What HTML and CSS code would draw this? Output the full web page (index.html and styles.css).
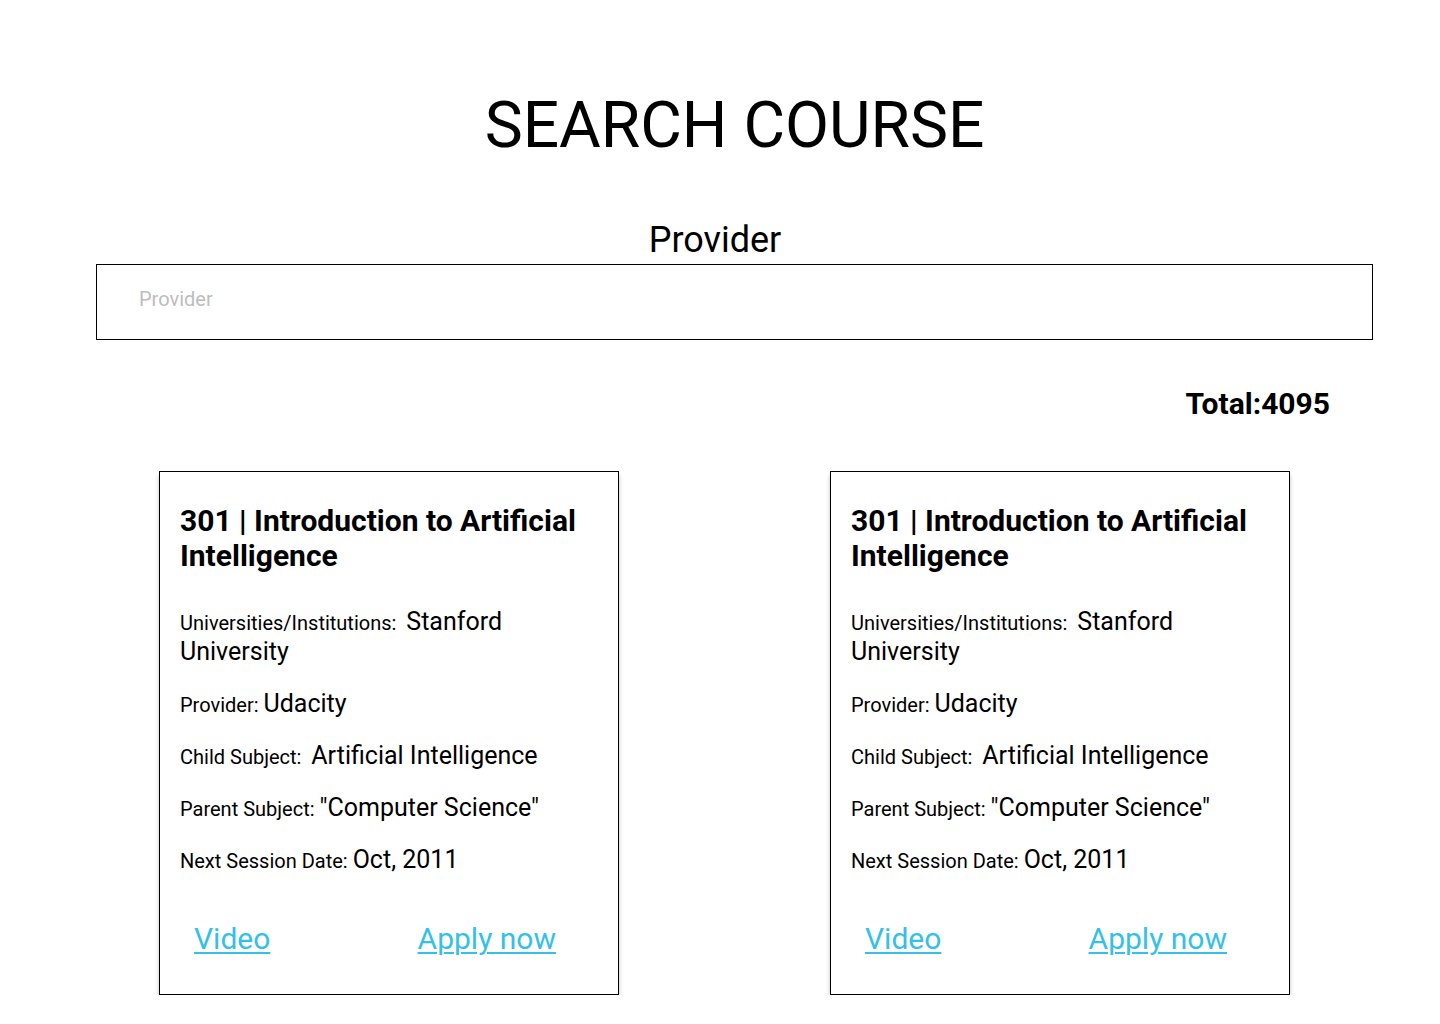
FILE: index.html
```html
<!DOCTYPE html>
<html lang="en">
<head>
<meta charset="utf-8">
<title>Search Course</title>
<link rel="stylesheet" href="styles.css">
</head>
<body>
<main class="page">
  <h1 class="title">SEARCH COURSE</h1>
  <section class="search">
    <label class="search-label" for="provider">Provider</label>
    <input class="search-input" id="provider" type="text" placeholder="Provider">
  </section>
  <div class="total">Total:4095</div>
  <section class="cards">
    <article class="card">
      <h2 class="card-title">301 | Introduction to Artificial Intelligence</h2>
      <p class="row"><span class="label">Universities/Institutions:</span>&nbsp; <span class="value">Stanford</span> <span class="value">University</span></p>
      <p class="row"><span class="label">Provider:</span> <span class="value">Udacity</span></p>
      <p class="row"><span class="label">Child Subject:</span>&nbsp; <span class="value">Artificial Intelligence</span></p>
      <p class="row"><span class="label">Parent Subject:</span> <span class="value">"Computer Science"</span></p>
      <p class="row"><span class="label">Next Session Date:</span> <span class="value">Oct, 2011</span></p>
      <div class="links">
        <a class="link" href="#">Video</a>
        <a class="link" href="#">Apply now</a>
      </div>
    </article>
    <article class="card">
      <h2 class="card-title">301 | Introduction to Artificial Intelligence</h2>
      <p class="row"><span class="label">Universities/Institutions:</span>&nbsp; <span class="value">Stanford</span> <span class="value">University</span></p>
      <p class="row"><span class="label">Provider:</span> <span class="value">Udacity</span></p>
      <p class="row"><span class="label">Child Subject:</span>&nbsp; <span class="value">Artificial Intelligence</span></p>
      <p class="row"><span class="label">Parent Subject:</span> <span class="value">"Computer Science"</span></p>
      <p class="row"><span class="label">Next Session Date:</span> <span class="value">Oct, 2011</span></p>
      <div class="links">
        <a class="link" href="#">Video</a>
        <a class="link" href="#">Apply now</a>
      </div>
    </article>
  </section>
</main>
</body>
</html>
```

FILE: styles.css
```css
* { box-sizing: border-box; }
html, body { margin: 0; padding: 0; background: #fff; }
body {
  font-family: Roboto, "Liberation Sans", Arial, sans-serif;
  color: #000;
}
.page {
  width: 1440px;
  padding: 88px 0 0 0;
}
.title {
  margin: 0 0 0 96px;
  width: 1277px;
  text-align: center;
  font-size: 64px;
  font-weight: 400;
  line-height: 75px;
}
.search {
  display: flex;
  flex-direction: column;
  margin-top: 56px;
}
.search-label {
  text-align: center;
  font-size: 36px;
  line-height: 42px;
  padding-right: 10px;
}
.search-input {
  margin: 3px 0 0 96px;
  width: 1277px;
  height: 76px;
  border: 1px solid #000;
  padding: 0 0 6px 42px;
  font-family: Roboto, "Liberation Sans", Arial, sans-serif;
  font-size: 20px;
  outline: none;
}
.search-input::placeholder { color: #bdbdbd; }
.total {
  margin-top: 46px;
  padding-right: 110px;
  text-align: right;
  font-size: 30px;
  font-weight: 700;
  line-height: 36px;
}
.cards {
  display: flex;
  gap: 211px;
  padding-left: 159px;
  margin-top: 49px;
}
.card {
  width: 460px;
  height: 524px;
  border: 1px solid #000;
  box-shadow: 0 4px 4px rgba(0,0,0,0.25);
  padding: 31px 20px 0 20px;
  display: flex;
  flex-direction: column;
}
.card-title {
  margin: 0 0 34px 0;
  font-size: 30px;
  font-weight: 700;
  line-height: 35px;
}
.row {
  margin: 0 0 22px 0;
  font-size: 20px;
  line-height: 20px;
}
.label { font-size: 20px; line-height: 20px; }
.value { font-size: 25px; line-height: 30px; }
.links {
  display: flex;
  justify-content: space-between;
  padding: 24px 42px 0 14px;
}
.link {
  color: #35bfe9;
  font-size: 30px;
  line-height: 36px;
  text-decoration: underline;
  text-decoration-thickness: 2px;
  text-underline-offset: 3px;
}
```
